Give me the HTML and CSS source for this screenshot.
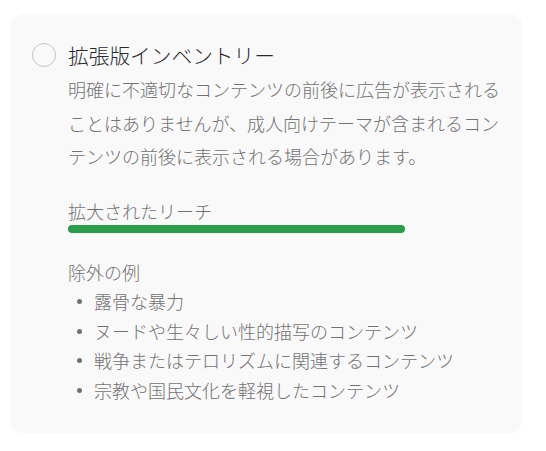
FILE: index.html
```html
<!DOCTYPE html>
<html lang="ja">
<head>
<meta charset="utf-8">
<link rel="stylesheet" href="styles.css">
</head>
<body>
<div class="card">
  <div class="header">
    <span class="radio"></span>
    <h2 class="title">拡張版インベントリー</h2>
  </div>
  <div class="body">
    <p class="desc">明確に不適切なコンテンツの前後に広告が表示されることはありませんが、成人向けテーマが含まれるコンテンツの前後に表示される場合があります。</p>
    <div class="reach">
      <div class="label">拡大されたリーチ</div>
      <div class="bar"></div>
    </div>
    <div class="examples">
      <div class="label2">除外の例</div>
      <ul class="list">
        <li>露骨な暴力</li>
        <li>ヌードや生々しい性的描写のコンテンツ</li>
        <li>戦争またはテロリズムに関連するコンテンツ</li>
        <li>宗教や国民文化を軽視したコンテンツ</li>
      </ul>
    </div>
  </div>
</div>
</body>
</html>
```
FILE: styles.css
```css
html, body {
  margin: 0;
  padding: 0;
  background: #ffffff;
}
body {
  font-family: "Noto Sans CJK JP", "Noto Sans", sans-serif;
  padding: 14px 0 0 11px;
}
.card {
  width: 511px;
  height: 419px;
  box-sizing: border-box;
  background: #f9f9f9;
  border-radius: 12px;
  padding: 27px 14px 0 21px;
}
.header {
  display: flex;
  align-items: center;
  gap: 12px;
}
.radio {
  width: 24px;
  height: 24px;
  box-sizing: border-box;
  border: 1.5px solid #c6c6c6;
  border-radius: 50%;
  flex: none;
}
.title {
  margin: 0;
  font-size: 20.7px;
  font-weight: 300;
  line-height: 28px;
  color: #2a2a2a;
}
.body {
  margin-left: 36px;
}
.desc {
  margin: 4px 0 0 0;
  font-size: 18px;
  font-weight: 300;
  line-height: 33.5px;
  color: #727272;
}
.reach {
  margin-top: 24px;
}
.label {
  font-size: 18px;
  font-weight: 300;
  line-height: 26px;
  color: #727272;
}
.bar {
  width: 337px;
  height: 8px;
  margin-top: 1px;
  border-radius: 4px;
  background: #2b9d4a;
}
.examples {
  margin-top: 25px;
}
.label2 {
  font-size: 18px;
  font-weight: 300;
  line-height: 29.5px;
  color: #727272;
}
.list {
  margin: 0;
  padding: 0;
  list-style: none;
}
.list li {
  display: flex;
  align-items: center;
  gap: 12px;
  font-size: 18px;
  font-weight: 300;
  line-height: 29.5px;
  color: #727272;
}
.list li::before {
  content: "";
  width: 5px;
  height: 5px;
  margin-left: 9px;
  border-radius: 50%;
  background: #707070;
  flex: none;
}
```
